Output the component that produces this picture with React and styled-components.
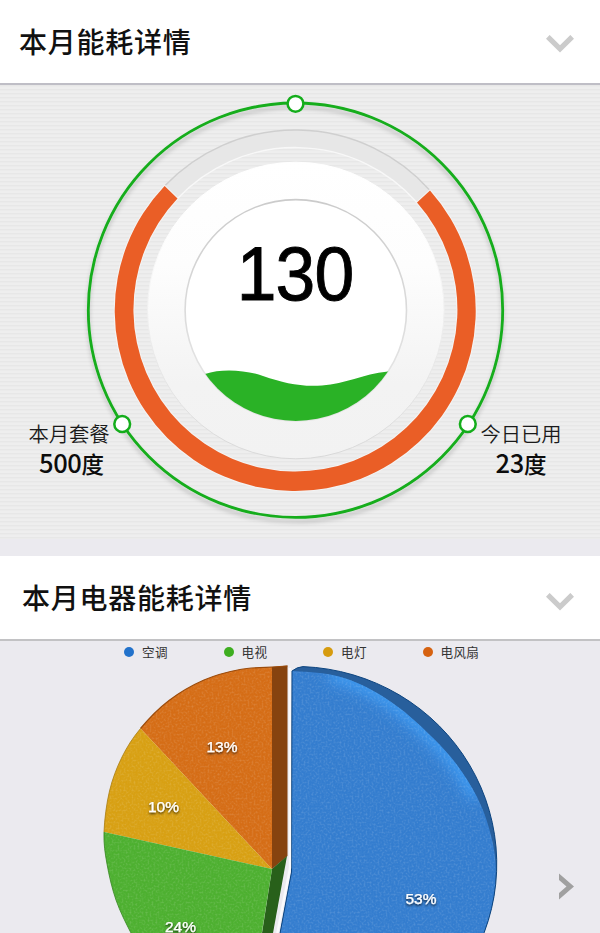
import React from 'react';
import styled, { createGlobalStyle } from 'styled-components';

const GlobalStyle = createGlobalStyle`
  * { box-sizing: border-box; }
  body { margin: 0; background: #ebeaef; }
`;

const Screen = styled.main`
  display: flex;
  flex-direction: column;
  width: 600px;
  height: 933px;
  overflow: hidden;
  background: #ebeaef;
  font-family: 'Liberation Sans', 'Noto Sans CJK SC', sans-serif;
`;

const SectionHeader = styled.header`
  display: flex;
  align-items: center;
  justify-content: space-between;
  flex: none;
  height: 85px;
  padding: 0 26px 0 ${(p) => p.$inset}px;
  background: #fff;
  border-bottom: 2px solid ${(p) => p.$line};
`;

const Title = styled.h2`
  margin: 0;
  padding-bottom: 2px;
  font: 500 28px/40px 'Noto Sans CJK SC', sans-serif;
  letter-spacing: 0.75px;
  color: #111;
`;

const Icon = styled.svg`
  display: block;
  width: 28px;
  height: 18px;
  margin-top: ${(p) => p.$top}px;
  fill: none;
  stroke: #cbcbcb;
  stroke-width: 5.2;
`;

const NextIcon = styled.svg`
  display: block;
  width: 15px;
  height: 27px;
  fill: #a0a0a0;
`;

const GaugePanel = styled.section`
  position: relative;
  flex: none;
  height: 454px;
  background: repeating-linear-gradient(#e7e7e7 0 1px, #ebebeb 1px 2px, #eeeeee 2px 4px);
`;

const Gauge = styled.svg`
  display: block;
  width: 600px;
  height: 454px;
`;

const Reading = styled.div`
  position: absolute;
  top: 147px;
  left: 184px;
  width: 222px;
  text-align: center;
  font-size: 76px;
  line-height: 84px;
  letter-spacing: -1px;
  transform: scaleX(0.94);
  -webkit-text-stroke: 0.9px #000;
  color: #000;
`;

const Stat = styled.div`
  position: absolute;
  top: 335px;
  left: ${(p) => p.$left}px;
  width: 90px;
  text-align: center;
  color: #1a1a1a;
  font-family: 'Noto Sans CJK SC', sans-serif;
`;

const StatLabel = styled.div`
  font-size: 20.3px;
  font-weight: 350;
  line-height: 27px;
  white-space: nowrap;
`;

const StatValue = styled.div`
  padding-left: ${(p) => p.$shift}px;
  font-size: 22.5px;
  font-weight: 500;
  line-height: 29px;
  color: #0c0c0c;
`;

const Amount = styled.span`
  font-size: 25.5px;
  letter-spacing: -0.4px;
`;

const Gap = styled.div`
  flex: none;
  height: 17px;
`;

const PiePanel = styled.section`
  position: relative;
  flex: 1;
`;

const Legend = styled.ul`
  position: absolute;
  top: 0;
  left: 124px;
  display: grid;
  grid-template-columns: 99.5px 99.5px 99.5px 80px;
  margin: 0;
  padding: 0;
  list-style: none;
`;

const LegendItem = styled.li`
  display: flex;
  align-items: center;
  gap: 8px;
  height: 21px;
  font: 400 12.6px/20px 'Noto Sans CJK SC', sans-serif;
  letter-spacing: 0.3px;
  color: #333;

  &::before {
    content: '';
    width: 10px;
    height: 10px;
    border-radius: 50%;
    background: ${(p) => p.$color};
  }
`;

const Pie = styled.svg`
  display: block;
  width: 600px;
  height: 292px;
  font: 15.5px 'Liberation Sans', sans-serif;
`;

const NextButton = styled.button`
  position: absolute;
  top: 232px;
  left: 559px;
  padding: 0;
  border: 0;
  background: none;
`;

// Catmull-Rom spline between two indexes of the point list, as cubic segments.
const curve = (pts, from = 0, to = pts.length - 1) => {
  const at = (i) => pts[Math.max(0, Math.min(pts.length - 1, i))];
  let d = '';
  for (let i = from; i < to; i += 1) {
    const [a, b, c, e] = [at(i - 1), at(i), at(i + 1), at(i + 2)];
    d += `C${b[0] + (c[0] - a[0]) / 6} ${b[1] + (c[1] - a[1]) / 6} ${c[0] - (e[0] - b[0]) / 6} ${c[1] - (e[1] - b[1]) / 6} ${c[0]} ${c[1]}`;
  }
  return d;
};

const FACE_EDGE = [[292, 671], [330, 674.5], [364, 686], [400, 708.5], [433, 738], [457, 765], [477, 797], [489, 828], [495.5, 862], [493.5, 900], [485, 933], [474, 960]];
const LEFT_RIM = [[272, 667], [240, 669.5], [204, 680], [169, 700.5], [140.5, 728.5], [122, 757], [109.5, 791], [104, 832], [107, 864], [116, 900], [131, 933], [147, 960]];

const BLUE_FACE = `M292 671${curve(FACE_EDGE)}H272L291.5 872Z`;
const BLUE_BODY = 'M292 671Q297 667 303 666.6A202 197.5 0 0 1 474 955H276L291.5 872Z';

const Chevron = ({ top }) => (
  <Icon $top={top} viewBox="0 0 28 18">
    <path d="M1.8 1.8 14 13.8 26.2 1.8" />
  </Icon>
);

const GaugeDial = () => (
  <Gauge viewBox="0 85 600 454">
    <defs>
      <linearGradient id="dial" x1="0" y1="0" x2="0" y2="1">
        <stop offset="0" stopColor="#fff" />
        <stop offset=".35" stopColor="#fdfdfd" />
        <stop offset=".75" stopColor="#f3f3f3" />
        <stop offset="1" stopColor="#f2f2f2" />
      </linearGradient>
      <linearGradient id="dialEdge" x1="0" y1="0" x2="0" y2="1">
        <stop offset=".2" stopColor="#fff" />
        <stop offset="1" stopColor="#d8d8d8" />
      </linearGradient>
      <linearGradient id="innerEdge" x1="0" y1="0" x2="0" y2="1">
        <stop offset="0" stopColor="#cbcbcb" />
        <stop offset=".8" stopColor="#e4e4e4" />
      </linearGradient>
      <filter id="ringShadow" x="-5%" y="-5%" width="110%" height="112%">
        <feDropShadow dx="0" dy="4" stdDeviation="2" floodOpacity=".2" />
      </filter>
      <clipPath id="bowl"><circle cx="295.8" cy="310.3" r="110.7" /></clipPath>
    </defs>
    <circle cx="295.5" cy="310.2" r="207.2" fill="none" stroke="#14ad1b" strokeWidth="2.8" filter="url(#ringShadow)" />
    <path d="M164.6 186A180.5 180.5 0 0 1 430 190.5L417 202.5A162 162 0 0 0 177.5 198.5Z" fill="#e7e7e7" />
    <path d="M164.6 186A180.5 180.5 0 0 1 430 190.5" fill="none" stroke="#cfcfcf" strokeWidth="1.5" />
    <path d="M177.5 198.5A162 162 0 0 1 417 202.5" fill="none" stroke="#f8f8f8" strokeWidth="1.4" />
    <path d="M164.6 186A180.5 180.5 0 1 0 430 190.5L417 202.5A162 162 0 1 1 177.5 198.5Z" fill="#ea5e26" stroke="#f4f4f4" strokeWidth="2" paintOrder="stroke" />
    <circle cx="295.8" cy="310.5" r="148.3" fill="url(#dial)" stroke="url(#dialEdge)" strokeWidth="1" />
    <circle cx="295.8" cy="310.3" r="110.7" fill="#fff" stroke="url(#innerEdge)" strokeWidth="1.6" />
    <path clipPath="url(#bowl)" d="M180 382L205 374C222 368 246 370 263 376C284 383 300 387 322 385.5C346 384 362 374 388 371.5L420 369V430H180Z" fill="#2ab226" />
    {[[295.5, 103.8], [122.2, 424], [467.8, 424]].map(([x, y]) => (
      <circle key={x} cx={x} cy={y} r="7.9" fill="#fff" stroke="#14ad1b" strokeWidth="2.5" />
    ))}
  </Gauge>
);

const SLICES = [
  ['53%', 421, 904],
  ['24%', 180.5, 931.5],
  ['10%', 163.5, 812],
  ['13%', 222, 752],
];

const PieChart = () => (
  <Pie viewBox="0 641 600 292">
    <defs>
      <filter id="grain" x="0" y="0" width="100%" height="100%" colorInterpolationFilters="sRGB">
        <feTurbulence type="fractalNoise" baseFrequency=".5" numOctaves="2" seed="4" result="n" />
        <feColorMatrix in="n" type="matrix" values="0 0 0 0 1  0 0 0 0 1  0 0 0 0 1  .35 0 0 0 -.15" result="specks" />
        <feComposite in="specks" in2="SourceGraphic" operator="in" result="s" />
        <feMerge><feMergeNode in="SourceGraphic" /><feMergeNode in="s" /></feMerge>
      </filter>
      <filter id="glow" x="-20%" y="-20%" width="140%" height="140%"><feGaussianBlur stdDeviation="7" /></filter>
      <filter id="labelShadow" x="-20%" y="-20%" width="140%" height="160%">
        <feDropShadow dx="0" dy="1.4" stdDeviation=".8" floodOpacity=".8" />
      </filter>
      <clipPath id="blueFace"><path d={BLUE_FACE} /></clipPath>
      <clipPath id="blueBody"><path d={BLUE_BODY} /></clipPath>
    </defs>
    <path d={BLUE_BODY} fill="#285f9c" />
    <g clipPath="url(#blueBody)">
      <g filter="url(#grain)">
        <path d={BLUE_FACE} fill="#347dcf" />
        <g clipPath="url(#blueFace)">
          <path d={`M330 674.5${curve(FACE_EDGE, 1, 6)}`} fill="none" stroke="#3c9bf4" strokeWidth="14" filter="url(#glow)" />
        </g>
      </g>
    </g>
    <path d={BLUE_BODY} fill="none" stroke="#0c447f" strokeWidth="1" />
    <path d="M289.7 668L290 868 276 940" fill="none" stroke="#fafafc" strokeWidth="2.4" />
    <path d="M272 667L287.5 665.5V856L272 869Z" fill="#86430f" />
    <path d="M272 869L287 856 273 933H262Z" fill="#28601a" />
    <g filter="url(#grain)">
      <path d={`M272 869V667${curve(LEFT_RIM, 0, 4)}Z`} fill="#d56d16" />
      <path d={`M272 869L140.5 728.5${curve(LEFT_RIM, 4, 7)}Z`} fill="#d8a013" />
      <path d={`M272 869L104 832${curve(LEFT_RIM, 7, 11)}H257.5Z`} fill="#4db030" />
    </g>
    <path d={`M287.5 666L272 667${curve(LEFT_RIM, 0, 4)}`} fill="none" stroke="#9b4b0b" strokeWidth="1.2" />
    <path d={`M140.5 728.5${curve(LEFT_RIM, 4, 7)}`} fill="none" stroke="#a87c10" strokeWidth=".8" />
    <path d={`M104 832${curve(LEFT_RIM, 7, 11)}`} fill="none" stroke="#35851f" strokeWidth=".8" />
    <g fill="#fff" stroke="#fff" strokeWidth=".25" textAnchor="middle" filter="url(#labelShadow)">
      {SLICES.map(([label, x, y]) => <text key={label} x={x} y={y}>{label}</text>)}
    </g>
  </Pie>
);

export default function App() {
  return (
    <>
      <GlobalStyle />
      <Screen>
        <SectionHeader $inset={19} $line="#bfbec6">
          <Title>本月能耗详情</Title>
          <Chevron top={5} />
        </SectionHeader>
        <GaugePanel>
          <GaugeDial />
          <Reading>130</Reading>
          <Stat $left={24}>
            <StatLabel>本月套餐</StatLabel>
            <StatValue $shift={5}><Amount>500</Amount>度</StatValue>
          </Stat>
          <Stat $left={476}>
            <StatLabel>今日已用</StatLabel>
            <StatValue $shift={0}><Amount>23</Amount>度</StatValue>
          </Stat>
        </GaugePanel>
        <Gap />
        <SectionHeader $inset={22} $line="#c2c2c4">
          <Title>本月电器能耗详情</Title>
          <Chevron top={8} />
        </SectionHeader>
        <PiePanel>
          <PieChart />
          <Legend>
            <LegendItem $color="#2272cb">空调</LegendItem>
            <LegendItem $color="#3eae20">电视</LegendItem>
            <LegendItem $color="#d69b0e">电灯</LegendItem>
            <LegendItem $color="#d66210">电风扇</LegendItem>
          </Legend>
          <NextButton aria-label="next">
            <NextIcon viewBox="0 0 15 27">
              <path d="M0 .5 15 13.5 0 26.5V20L7.5 13.5 0 7Z" />
            </NextIcon>
          </NextButton>
        </PiePanel>
      </Screen>
    </>
  );
}
